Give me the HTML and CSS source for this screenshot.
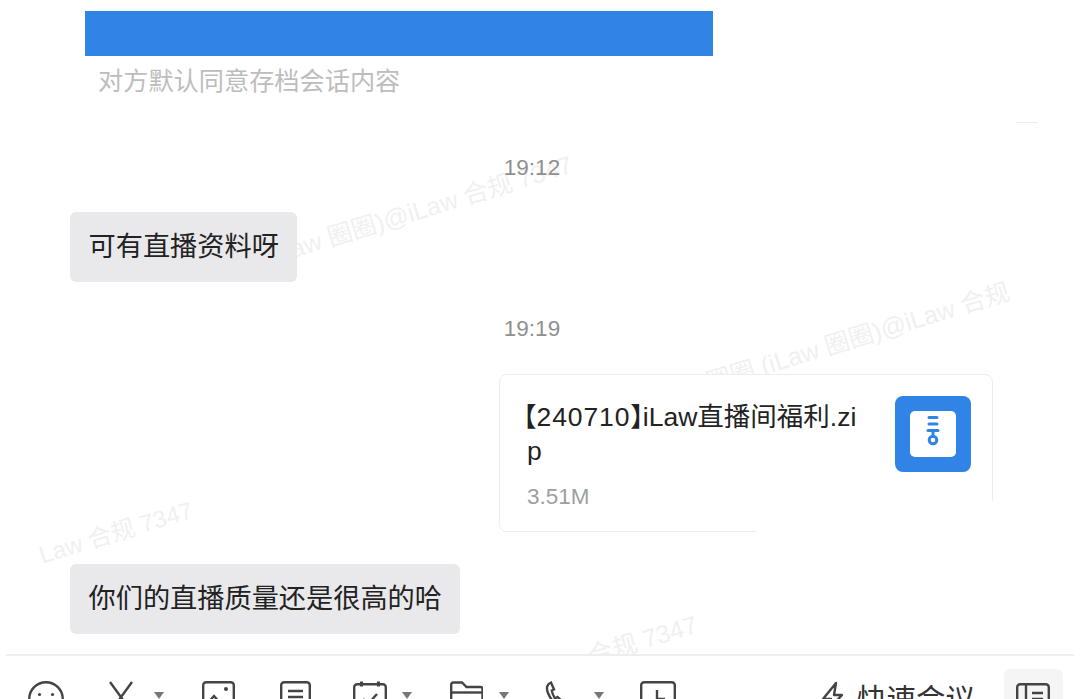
FILE: index.html
```html
<!DOCTYPE html>
<html lang="en">
<head>
<meta charset="UTF-8">
<meta name="viewport" content="width=device-width, initial-scale=1.0">
<title>Chat</title>
<link rel="stylesheet" href="styles.css">
</head>
<body>

<div class="chat">

<div class="mark mark-a">iLaw 圈圈)@iLaw 合规 7347</div>
<div class="mark mark-b">iLaw 圈圈 (iLaw 圈圈)@iLaw 合规</div>
<div class="mark mark-c">Law 合规 7347</div>
<div class="mark mark-d">iLaw 圈圈)@iLaw 合规 7347</div>
<div class="corner-line"></div>

<div class="notice-bar"></div>
<div class="notice-text">对方默认同意存档会话内容</div>

<div class="time time-first">19:12</div>
<div class="bubble bubble-first">可有直播资料呀</div>

<div class="time time-second">19:19</div>

<div class="file-row">
<div class="file-card">
<div class="file-info">
<div class="file-name"><span class="bracket-open">【</span><span class="digits">240710</span><span class="bracket-close">】</span>iLaw直播间福利.zip</div>
<div class="file-size">3.51M</div>
</div>
<div class="file-icon">
<div class="file-icon-inner">
<svg width="46" height="46" viewBox="0 0 46 46" fill="none" stroke="#2f84e5" stroke-linecap="round">
<path d="M19 6.5h8M19 13h8" stroke-width="3"/>
<path d="M18 19.5h10" stroke-width="3"/>
<path d="M23 20v5" stroke-width="3"/>
<circle cx="23" cy="29" r="3.8" stroke-width="3"/>
</svg>
</div>
</div>
<div class="card-fade"></div>
</div>
</div>

<div class="bubble bubble-second">你们的直播质量还是很高的哈</div>

</div>

<div class="toolbar">
<div class="tools">

<div class="tool">
<svg width="36" height="36" viewBox="0 0 36 36" fill="none" stroke="#444" stroke-width="2.4"><circle cx="18" cy="18" r="16.8"/><circle cx="11.5" cy="13.5" r="1.6" fill="#444" stroke="none"/><circle cx="24.5" cy="13.5" r="1.6" fill="#444" stroke="none"/><path d="M10 23c2 4 14 4 16 0"/></svg>
</div>

<div class="tool">
<svg width="24" height="36" viewBox="0 0 24 36" fill="none" stroke="#444" stroke-width="2.4"><path d="M1 1l16 22M23 1L7 23"/><circle cx="5" cy="27" r="4"/><circle cx="19" cy="27" r="4"/></svg>
<span class="caret caret-near"></span>
</div>

<div class="tool">
<svg width="33" height="36" viewBox="0 0 33 36" fill="none" stroke="#444" stroke-width="2.4"><rect x="1.2" y="1.2" width="30.6" height="30" rx="3"/><circle cx="24" cy="8" r="2" fill="#444" stroke="none"/><path d="M4 24l8-9 8 9"/></svg>
</div>

<div class="tool">
<svg width="31" height="36" viewBox="0 0 31 36" fill="none" stroke="#444" stroke-width="2.4"><rect x="1.2" y="1.2" width="28.6" height="32" rx="3"/><path d="M8 10h15M8 16h15"/></svg>
</div>

<div class="tool">
<svg width="34" height="36" viewBox="0 0 34 36" fill="none" stroke="#444" stroke-width="2.4"><rect x="1.2" y="3.2" width="31.6" height="30" rx="3"/><path d="M8.5 0.5v5M25.5 0.5v5" stroke-width="3"/><path d="M10 18l5 5 9-10"/></svg>
<span class="caret"></span>
</div>

<div class="tool">
<svg width="33" height="36" viewBox="0 0 33 36" fill="none" stroke="#444" stroke-width="2.4"><path d="M1.2 31V3.5a2 2 0 0 1 2-2h8.800l4.500 4.500h14a2 2 0 0 1 2 2V31"/><path d="M1.200 11.500h30.600"/></svg>
<span class="caret"></span>
</div>

<div class="tool">
<svg width="18" height="36" viewBox="0 0 18 36" fill="none" stroke="#444" stroke-width="2.4"><path d="M6 1.500C2 3 1 7 3 12c2 5 5 9 9 11 3 1 4.500-1 5-3l-4.500-4-2.500 1.500C8.500 15 7 12 6.800 9.500L9 8.500 6 1.500z"/></svg>
<span class="caret"></span>
</div>

<div class="tool">
<svg width="36" height="36" viewBox="0 0 36 36" fill="none" stroke="#444" stroke-width="2.4"><rect x="1.2" y="1.2" width="33.6" height="33.6" rx="3"/><path d="M17 9v9h8"/></svg>
</div>

</div>

<div class="quick">
<svg class="bolt" width="23" height="36" viewBox="0 0 23 36" fill="none" stroke="#444" stroke-width="2.4" stroke-linejoin="round"><path d="M15 3L2 19h8l-5 13 16-17h-8l2-12z"/></svg>
<span class="quick-text">快速会议</span>
</div>

<div class="side-btn">
<svg width="34" height="36" viewBox="0 0 34 36" fill="none" stroke="#444" stroke-width="2.4"><rect x="1.2" y="1.2" width="31.6" height="33" rx="3"/><path d="M10 1.2v33M16 10h11M16 16h11"/></svg>
</div>
</div>

</body>
</html>
```

FILE: styles.css
```css
html,body{
margin:0;
height:699px;
overflow:hidden;
background:white;
font-family:"Liberation Sans","Noto Sans CJK SC",sans-serif;
}

.chat{
position:relative;
height:654px;
overflow:hidden;
display:flex;
flex-direction:column;
align-items:flex-start;
}

.notice-bar{
width:628px;
height:45px;
margin:11px 0 0 85px;
background:#2f84e5;
flex:none;
}

.notice-text{
margin:9px 0 0 98px;
font-size:25.2px;
line-height:33px;
color:#bdbdbd;
}

.time{
position:relative;
width:100%;
margin-left:-8px;
text-align:center;
font-size:22.5px;
line-height:26px;
color:#8f8f8f;
}

.time-first{
margin-top:57px;
}

.time-second{
margin-top:34px;
}

.bubble{
position:relative;
margin-left:70px;
padding:0 18.5px;
height:70px;
line-height:70px;
font-size:27.2px;
color:#222;
background:#e9e9eb;
border-radius:6px;
white-space:nowrap;
}

.bubble-first{
margin-top:31px;
}

.bubble-second{
margin-top:32px;
}

.file-row{
margin:32px 0 0 499px;
}

.file-card{
position:relative;
box-sizing:border-box;
width:494px;
height:158px;
padding:21px 21px 0 27px;
background:white;
border:1px solid #ededed;
border-radius:8px;
display:flex;
justify-content:space-between;
align-items:flex-start;
}

.card-fade{
position:absolute;
right:-2px;
bottom:-2px;
width:238px;
height:32px;
background:white;
}

.file-info{
width:338px;
}

.file-name{
margin-top:4px;
font-size:26.5px;
line-height:34px;
color:#222;
word-break:break-all;
}

.bracket-open{
margin-left:-17px;
}

.bracket-close{
margin-right:-14px;
}

.digits{
letter-spacing:0.9px;
}

.file-size{
margin-top:16px;
font-size:22.5px;
line-height:26px;
color:#9e9e9e;
}

.file-icon{
width:76px;
height:76px;
background:#2f84e5;
border-radius:8px;
display:flex;
justify-content:center;
align-items:center;
flex:none;
}

.file-icon-inner{
width:46px;
height:46px;
background:white;
border-radius:5px;
}

.file-icon-inner svg{
display:block;
}

.mark{
position:absolute;
font-size:25px;
line-height:30px;
color:#f0f0f0;
white-space:nowrap;
transform-origin:left center;
transform:rotate(-17deg);
}

.mark-a{
left:272px;
top:240px;
}

.mark-b{
left:651px;
top:385px;
}

.mark-c{
left:40px;
top:541px;
font-size:24px;
}

.mark-d{
left:397px;
top:700px;
}

.corner-line{
position:absolute;
left:1016px;
top:122px;
width:22px;
height:1px;
background:#eeeeee;
}

.toolbar{
box-sizing:border-box;
height:45px;
margin:0 6px;
padding-left:22px;
border-top:2px solid #eeeeee;
display:flex;
align-items:flex-start;
}

.tools{
display:grid;
grid-template-columns:81px 93px 78px 73px 97px 95px 95px 36px;
padding-top:25px;
}

.tool{
position:relative;
height:36px;
}

.tool svg{
display:block;
}

.caret{
position:absolute;
top:11px;
left:49px;
width:0;
height:0;
border-left:5.5px solid transparent;
border-right:5.5px solid transparent;
border-top:7px solid #777;
}

.caret-near{
left:45px;
}

.quick{
display:flex;
align-items:flex-start;
gap:13px;
margin-left:145px;
padding-top:24px;
}

.quick-text{
margin-top:-3px;
font-size:29.5px;
line-height:40px;
color:#333;
font-family:"Noto Sans CJK SC",sans-serif;
}

.side-btn{
box-sizing:border-box;
width:59px;
height:60px;
margin:13px 0 0 29px;
padding:14px 0 0 12px;
background:#f5f5f5;
border-radius:6px;
}
```
